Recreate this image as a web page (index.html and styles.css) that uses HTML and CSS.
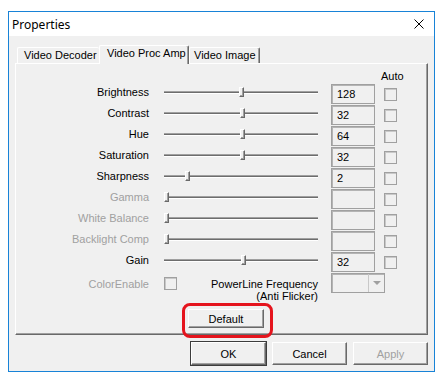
FILE: index.html
```html
<!DOCTYPE html>
<html lang="en">
<head>
  <meta charset="UTF-8" />
  <title>Properties</title>
  <link rel="stylesheet" href="styles.css">
</head>
<body>
  <div class="window">
    <div class="titlebar">
      <span class="title">Properties</span>
      <svg class="close" width="10" height="10" viewBox="0 0 10 10">
        <path d="M0.5 0.5 L9.5 9.5 M9.5 0.5 L0.5 9.5" stroke="#000" stroke-width="1" fill="none"/>
      </svg>
    </div>

    <div class="dialog">
      <div class="tabs">
        <div class="tab tab-decoder">Video Decoder</div>
        <div class="tab tab-proc active">Video Proc Amp</div>
        <div class="tab tab-image">Video Image</div>
      </div>

      <div class="panel">
        <div class="grid">
          <div class="auto-head">Auto</div>

          <div class="label">Brightness</div>
          <div class="slider"><div class="track"></div><div class="thumb" style="--pos: 0.502"></div></div>
          <div class="edit">128</div>
          <div class="check"></div>

          <div class="label">Contrast</div>
          <div class="slider"><div class="track"></div><div class="thumb" style="--pos: 0.507"></div></div>
          <div class="edit">32</div>
          <div class="check"></div>

          <div class="label">Hue</div>
          <div class="slider"><div class="track"></div><div class="thumb" style="--pos: 0.507"></div></div>
          <div class="edit">64</div>
          <div class="check"></div>

          <div class="label">Saturation</div>
          <div class="slider"><div class="track"></div><div class="thumb" style="--pos: 0.507"></div></div>
          <div class="edit">32</div>
          <div class="check"></div>

          <div class="label">Sharpness</div>
          <div class="slider"><div class="track"></div><div class="thumb" style="--pos: 0.14"></div></div>
          <div class="edit">2</div>
          <div class="check"></div>

          <div class="label disabled">Gamma</div>
          <div class="slider"><div class="track"></div><div class="thumb" style="--pos: 0"></div></div>
          <div class="edit"></div>
          <div class="check"></div>

          <div class="label disabled">White Balance</div>
          <div class="slider"><div class="track"></div><div class="thumb" style="--pos: 0"></div></div>
          <div class="edit"></div>
          <div class="check"></div>

          <div class="label disabled">Backlight Comp</div>
          <div class="slider"><div class="track"></div><div class="thumb" style="--pos: 0"></div></div>
          <div class="edit"></div>
          <div class="check"></div>

          <div class="label">Gain</div>
          <div class="slider"><div class="track"></div><div class="thumb" style="--pos: 0.515"></div></div>
          <div class="edit">32</div>
          <div class="check"></div>

          <div class="label label-plain disabled">ColorEnable</div>
          <div class="power">
            <div class="check"></div>
            <div class="power-text">PowerLine Frequency<br>(Anti Flicker)</div>
          </div>
          <div class="combo"><span class="combo-btn"><span class="arrow"></span></span></div>
        </div>

        <div class="default-row">
          <div class="default-wrap">
            <button class="btn btn-default">Default</button>
            <span class="highlight"></span>
          </div>
        </div>
      </div>

      <div class="actions">
        <button class="btn btn-ok">OK</button>
        <button class="btn">Cancel</button>
        <button class="btn disabled">Apply</button>
      </div>
    </div>
  </div>
</body>
</html>
```

FILE: styles.css
```css
body {
  margin: 0;
  background: #fff;
  font-family: "Liberation Sans", Arial, sans-serif;
  font-size: 11px;
  color: #000;
}

.window {
  margin: 11px 0 0 8px;
  width: 427px;
  height: 361px;
  box-sizing: border-box;
  border: 1px solid #1883d7;
  background: #f0f0f0;
}

.titlebar {
  height: 24px;
  background: #fff;
  display: flex;
  align-items: center;
  justify-content: space-between;
  padding: 0 10px 0 3px;
}

.title {
  font-family: "Noto Sans", sans-serif;
  font-size: 12px;
}

.close {
  display: block;
}

.dialog {
  padding: 9px 6px 0 6px;
}

.tabs {
  display: flex;
  align-items: flex-end;
  height: 18px;
  padding-left: 2px;
  position: relative;
  z-index: 1;
}

.tab {
  box-sizing: border-box;
  height: 16px;
  line-height: 15px;
  padding-left: 6px;
  border-top: 1px solid #fff;
  border-left: 1px solid #fff;
  border-right: 1px solid #696969;
  border-top-left-radius: 2px;
  border-top-right-radius: 2px;
  box-shadow: inset -1px 0 0 #a0a0a0;
  background: #f0f0f0;
}

.tab-decoder { width: 82px; border-right: none; box-shadow: none; }
.tab-proc { width: 90px; }
.tab-image { width: 71px; padding-left: 4px; }

.tab.active {
  height: 19px;
  margin-bottom: -1px;
  line-height: 15px;
  padding-left: 7px;
}

.panel {
  width: 413px;
  height: 272px;
  box-sizing: border-box;
  border: 1px solid;
  border-color: #fff #696969 #696969 #fff;
  box-shadow: inset -1px -1px 0 #a0a0a0;
}

.grid {
  display: grid;
  grid-template-columns: 133px 182px 53px 13px;
  grid-template-rows: 20px;
  grid-auto-rows: 21px;
}

.auto-head {
  grid-column: 4;
  padding-top: 6px;
  line-height: 13px;
  margin-left: -3px;
  white-space: nowrap;
}

.label {
  grid-column: 1;
  display: flex;
  align-items: center;
  justify-content: flex-end;
  padding-bottom: 5px;
  white-space: nowrap;
}

.label-plain {
  padding-bottom: 0;
}

.disabled {
  color: #a0a0a0;
}

.slider {
  position: relative;
  width: 154px;
  margin-left: 15px;
}

.track {
  margin-top: 7px;
  height: 1px;
  background: #6d6d6d;
  border-top: 1px solid #a0a0a0;
  border-bottom: 1px solid #fff;
}

.thumb {
  position: absolute;
  top: 3px;
  left: calc(var(--pos) * 149px);
  width: 3px;
  height: 8px;
  background: #f0f0f0;
  border: 1px solid;
  border-color: #fff #696969 #696969 #fff;
  box-shadow: inset -1px -1px 0 #a0a0a0;
}

.edit {
  width: 44px;
  height: 20px;
  box-sizing: border-box;
  border: 1px solid #a0a0a0;
  box-shadow: inset 1px 1px 0 #b4b4b4;
  padding-left: 5px;
  line-height: 18px;
}

.check {
  width: 13px;
  height: 13px;
  box-sizing: border-box;
  align-self: center;
  border: 1px solid #a0a0a0;
  box-shadow: inset 1px 1px 0 #c8c8c8;
}

.power {
  display: flex;
  align-items: center;
  justify-content: space-between;
  padding: 0 13px 0 15px;
}

.power-text {
  align-self: flex-start;
  margin-top: 5px;
  line-height: 12px;
  text-align: right;
  white-space: nowrap;
}

.combo {
  position: relative;
  width: 54px;
  height: 20px;
  box-sizing: border-box;
  border: 1px solid #a0a0a0;
  box-shadow: inset 1px 1px 0 #b4b4b4;
  display: flex;
  justify-content: flex-end;
}

.combo-btn {
  width: 16px;
  height: 18px;
  box-sizing: border-box;
  border-left: 1px solid #c8c8c8;
  display: flex;
  align-items: center;
  justify-content: center;
}

.arrow {
  width: 0;
  height: 0;
  border-left: 4px solid transparent;
  border-right: 4px solid transparent;
  border-top: 4px solid #a0a0a0;
}

.default-row {
  margin-top: 15px;
  padding-left: 172px;
}

.default-wrap {
  position: relative;
  display: inline-block;
}

.btn {
  box-sizing: border-box;
  width: 75px;
  height: 23px;
  padding: 0;
  font-family: "Liberation Sans", Arial, sans-serif;
  font-size: 11px;
  color: #000;
  background: #f0f0f0;
  border: 1px solid;
  border-color: #fff #696969 #696969 #fff;
  box-shadow: inset -1px -1px 0 #a0a0a0;
  display: block;
}

.btn-default {
  width: 76px;
  height: 19px;
}

.btn-ok {
  box-shadow: inset -1px -1px 0 #a0a0a0, 0 0 0 1px #3c3c3c;
  border-color: #fff #696969 #696969 #fff;
}

.btn.disabled {
  color: #a0a0a0;
}

.highlight {
  position: absolute;
  left: -6px;
  top: -6px;
  width: 91px;
  height: 35px;
  box-sizing: border-box;
  border: 3px solid #e5141d;
  border-radius: 8px;
}

.actions {
  display: flex;
  justify-content: flex-end;
  gap: 6px;
  margin-top: 7px;
}
```
